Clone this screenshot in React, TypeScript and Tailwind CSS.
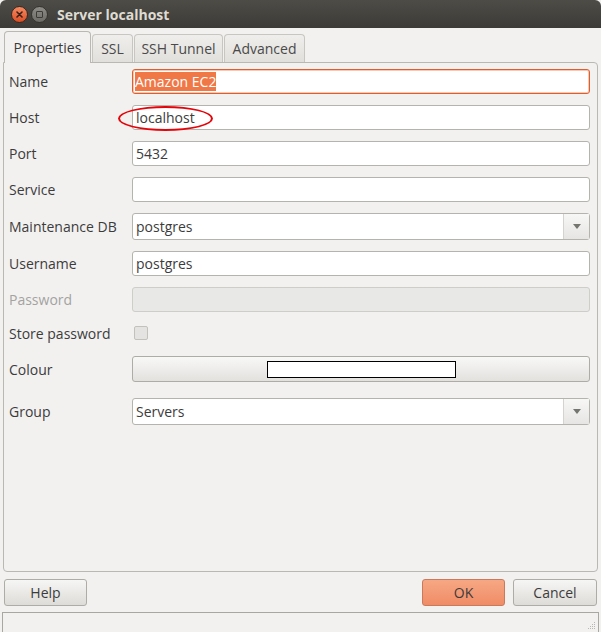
import React from "react";

const font = { fontFamily: '"Open Sans", "Noto Sans", sans-serif' };

function Label({ children, muted }: { children: React.ReactNode; muted?: boolean }) {
  return (
    <div className={`w-[128px] shrink-0 pl-[5px] ${muted ? "text-[#a3a3a1]" : "text-[#3c3c3c]"}`}>
      {children}
    </div>
  );
}

function TextField({ value }: { value?: string }) {
  return (
    <div className="flex h-[25px] flex-1 items-center rounded-[3px] border border-[#b5b3ae] bg-white pl-[3px] text-[#3c3c3c]">
      {value}
    </div>
  );
}

function Combo({ value }: { value: string }) {
  return (
    <div className="flex h-[27px] flex-1 items-stretch rounded-[3px] border border-[#b5b3ae] bg-white text-[#3c3c3c]">
      <div className="flex flex-1 items-center pl-[3px]">{value}</div>
      <div className="flex w-[26px] items-center justify-center border-l border-[#d5d3cf] bg-gradient-to-b from-[#f7f7f6] to-[#e6e5e3]">
        <svg width="8" height="5" viewBox="0 0 8 5">
          <path d="M0 0 L8 0 L4 5 Z" fill="#757570" />
        </svg>
      </div>
    </div>
  );
}

function Tab({ label, active, width }: { label: string; active?: boolean; width: string }) {
  if (active) {
    return (
      <div
        className={`relative z-10 -mb-px flex h-[32px] items-center justify-center rounded-t-[4px] border border-b-0 border-[#bab8b3] bg-[#f2f1f0] text-[#3c3c3c] ${width}`}
      >
        {label}
      </div>
    );
  }
  return (
    <div
      className={`flex h-[28px] items-center justify-center rounded-t-[4px] border border-b-0 border-[#c8c6c1] bg-gradient-to-b from-[#efeeec] to-[#e2e0dc] text-[#4a4a4a] ${width}`}
    >
      {label}
    </div>
  );
}

function Button({ label, primary, width }: { label: string; primary?: boolean; width: string }) {
  return (
    <div
      className={`flex h-[27px] items-center justify-center rounded-[3px] border ${width} ${
        primary
          ? "border-[#c97a5c] bg-gradient-to-b from-[#f7a784] to-[#ef8c66] text-[#3c3c3c]"
          : "border-[#aeaca7] bg-gradient-to-b from-[#f6f6f5] to-[#dedcd8] text-[#3c3c3c]"
      }`}
    >
      {label}
    </div>
  );
}

export default function App() {
  return (
    <div className="flex h-[632px] w-[601px] flex-col overflow-hidden bg-[#f2f1f0] text-[14px]" style={font}>
      {/* title bar */}
      <div className="flex h-[28px] shrink-0 items-center rounded-t-[6px] bg-gradient-to-b from-[#4d4c47] to-[#3c3b37]">
        <div className="ml-[11px] flex h-[17px] w-[17px] items-center justify-center rounded-full border border-[#3a2a22] bg-gradient-to-b from-[#f58a61] to-[#db4d22]">
          <svg width="7" height="7" viewBox="0 0 7 7">
            <path d="M1 1 L6 6 M6 1 L1 6" stroke="#3b2019" strokeWidth="1.6" strokeLinecap="round" />
          </svg>
        </div>
        <div className="ml-[3px] flex h-[17px] w-[17px] items-center justify-center rounded-full border border-[#35342f] bg-gradient-to-b from-[#8d8c86] to-[#6d6c67]">
          <div className="h-[7px] w-[7px] rounded-[1px] border-[1.5px] border-[#3c3b37]" />
        </div>
        <div className="ml-[9px] font-bold text-[#dfdbd2]">Server localhost</div>
      </div>

      {/* tabs */}
      <div className="mt-[3px] flex items-end gap-[1px] pl-[4px]">
        <Tab label="Properties" active width="w-[87px]" />
        <Tab label="SSL" width="w-[41px]" />
        <Tab label="SSH Tunnel" width="w-[89px]" />
        <Tab label="Advanced" width="w-[81px]" />
      </div>

      {/* panel */}
      <div className="mx-[3px] h-[510px] shrink-0 rounded-b-[4px] rounded-tr-[4px] border border-[#bab8b3] pt-[6px] pr-[7px]">
        <div className="flex items-center">
          <Label>Name</Label>
          <div className="flex h-[25px] flex-1 items-center rounded-[3px] border border-[#e05d2d] bg-white pl-[2px] shadow-[inset_0_0_0_1px_#f9c7b2]">
            <span className="bg-[#f07746] leading-[19px] text-white">Amazon EC2</span>
          </div>
        </div>
        <div className="mt-[11px] flex items-center">
          <Label>Host</Label>
          <div className="relative flex flex-1">
            <TextField value="localhost" />
            <div className="pointer-events-none absolute left-[-14px] top-[1px] h-[25px] w-[95px] rounded-[50%] border-[2.5px] border-[#e4050a]" />
          </div>
        </div>
        <div className="mt-[11px] flex items-center">
          <Label>Port</Label>
          <TextField value="5432" />
        </div>
        <div className="mt-[11px] flex items-center">
          <Label>Service</Label>
          <TextField />
        </div>
        <div className="mt-[11px] flex items-center">
          <Label>Maintenance DB</Label>
          <Combo value="postgres" />
        </div>
        <div className="mt-[11px] flex items-center">
          <Label>Username</Label>
          <TextField value="postgres" />
        </div>
        <div className="mt-[11px] flex items-center">
          <Label muted>Password</Label>
          <div className="h-[25px] flex-1 rounded-[3px] border border-[#cfcdc9] bg-[#e8e8e7]" />
        </div>
        <div className="mt-[8px] flex h-[26px] items-center">
          <Label>Store password</Label>
          <div className="ml-[2px] h-[14px] w-[14px] rounded-[2px] border border-[#c3c1bc] bg-[#e4e3e1]" />
        </div>
        <div className="mt-[10px] flex items-center">
          <Label>Colour</Label>
          <div className="flex h-[26px] flex-1 items-center justify-center rounded-[3px] border border-[#aeaca7] bg-gradient-to-b from-[#f8f8f7] to-[#e3e1de]">
            <div className="h-[17px] w-[189px] border border-black bg-white" />
          </div>
        </div>
        <div className="mt-[16px] flex items-center">
          <Label>Group</Label>
          <Combo value="Servers" />
        </div>
      </div>

      {/* buttons */}
      <div className="mt-[7px] flex px-[4px]">
        <Button label="Help" width="w-[83px]" />
        <div className="flex-1" />
        <Button label="OK" primary width="w-[83px]" />
        <div className="w-[8px]" />
        <Button label="Cancel" width="w-[84px]" />
      </div>

      {/* status bar */}
      <div className="relative mx-[2px] mt-[6px] flex-1 border-t border-l border-r border-[#a9a7a2] bg-[#f2f1f0]">
        <svg className="absolute bottom-[2px] right-[2px]" width="10" height="10" viewBox="0 0 10 10">
          <g fill="#b9b7b2">
            <rect x="8" y="2" width="1" height="1" />
            <rect x="6" y="4" width="1" height="1" />
            <rect x="8" y="4" width="1" height="1" />
            <rect x="4" y="6" width="1" height="1" />
            <rect x="6" y="6" width="1" height="1" />
            <rect x="8" y="6" width="1" height="1" />
            <rect x="2" y="8" width="1" height="1" />
            <rect x="4" y="8" width="1" height="1" />
            <rect x="6" y="8" width="1" height="1" />
            <rect x="8" y="8" width="1" height="1" />
          </g>
        </svg>
      </div>
    </div>
  );
}
